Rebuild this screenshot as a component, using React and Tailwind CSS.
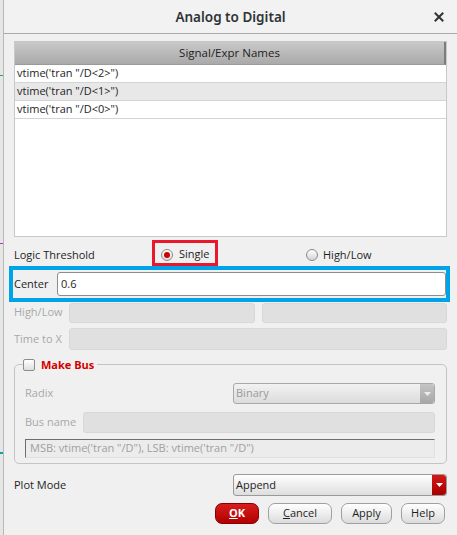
export default function App() {
  const rows = [`vtime('tran "/D<2>")`, `vtime('tran "/D<1>")`, `vtime('tran "/D<0>")`];
  return (
    <div className="flex h-[535px] w-[457px] overflow-hidden whitespace-nowrap bg-[#f0f0f0] text-[11px] text-[#1e1e1e]" style={{ fontFamily: '"Open Sans", "Noto Sans", sans-serif' }}>
      {/* desktop edge */}
      <div className="relative w-[3px] shrink-0 bg-[#e6e6e6]">
        <div className="absolute left-0 top-[75px] h-px w-[3px] bg-[#22aa44]" />
        <div className="absolute left-0 top-[243px] h-px w-[3px] bg-[#cc22cc]" />
        <div className="absolute left-0 top-[452px] h-[2px] w-[3px] bg-[#12a0a8]" />
      </div>
      <div className="flex flex-1 flex-col border-l border-[#b8b8b8]">
        {/* Title bar */}
        <div className="relative flex h-[34px] shrink-0 items-center justify-center border-b border-[#a9a9a9] bg-[#f2f2f2] pt-[2px]">
          <span className="text-[13.5px] font-semibold text-[#2e3436]" style={{ fontFamily: '"Noto Sans", sans-serif' }}>Analog to Digital</span>
          <svg className="absolute right-[13px] top-[12px]" width="10" height="10" viewBox="0 0 10 10">
            <path d="M1.5 1.5 L8.5 8.5 M8.5 1.5 L1.5 8.5" stroke="#2e3436" strokeWidth="2" strokeLinecap="square" />
          </svg>
        </div>

        <div className="flex flex-1 flex-col pl-[10px] pr-[10px] pt-[7px]">
          {/* Signal list */}
          <div className="h-[196px] border border-[#c8c8c8] bg-white">
            <div className="flex h-[23px] items-center justify-center border-b border-r-2 border-[#9a9a9a] border-r-[#7c7c7c] bg-gradient-to-b from-[#c9c9c9] to-[#a9a9a9] text-[11.5px] text-[#222]">
              Signal/Expr Names
            </div>
            {rows.map((r, i) => (
              <div key={r} className={`flex h-[18px] items-center border-b border-[#d4d4d4] pl-[2px] ${i === 1 ? "bg-[#e8e8e8]" : "bg-white"}`}>
                {r}
              </div>
            ))}
          </div>

          {/* Logic threshold */}
          <div className="mt-[3px] flex h-[26px] items-center">
            <span className="w-[138px] pt-[4px]">Logic Threshold</span>
            <div className="flex h-[26px] w-[66px] items-center border-[3px] border-[#e8192c] pl-[6px] pt-[3px]">
              <span className="mr-[6px] flex h-[12px] w-[12px] items-center justify-center rounded-full border border-[#8a8a8a] bg-gradient-to-b from-white to-[#dcdcdc]">
                <span className="h-[6px] w-[6px] rounded-full bg-[#d00000]" />
              </span>
              Single
            </div>
            <div className="ml-[88px] flex items-center pt-[4px]">
              <span className="mr-[5px] h-[12px] w-[12px] rounded-full border border-[#8a8a8a] bg-gradient-to-b from-white to-[#d4d4d4]" />
              High/Low
            </div>
          </div>

          {/* Center */}
          <div className="-ml-[5px] -mr-[3px] flex h-[36px] items-center border-[4px] border-[#00a2e8]">
            <span className="w-[44px] pl-[1px]">Center</span>
            <div className="flex h-[24px] flex-1 items-center rounded-[3px] border border-[#8c8c8c] bg-white pl-[3px]">0.6</div>
          </div>

          {/* High/Low */}
          <div className="flex h-[21px] items-center gap-[7px] text-[#a8a8a8]">
            <span className="w-[48px]">High/Low</span>
            <div className="h-[20px] flex-1 rounded-[3px] border border-[#d8d8d8] bg-[#e0e0e0]" />
            <div className="h-[20px] flex-1 rounded-[3px] border border-[#d8d8d8] bg-[#e0e0e0]" />
          </div>

          {/* Time to X */}
          <div className="mt-[5px] flex h-[22px] items-center gap-[7px] text-[#a8a8a8]">
            <span className="w-[48px]">Time to X</span>
            <div className="h-[22px] flex-1 rounded-[3px] border border-[#d8d8d8] bg-[#e0e0e0]" />
          </div>

          {/* Make Bus group */}
          <div className="relative mt-[14px] h-[100px] rounded-[5px] border border-[#c4c4c4] pl-[10px] pr-[11px] pt-[18px] text-[#a8a8a8]">
            <div className="absolute -top-[8px] left-[8px] flex items-center bg-[#f0f0f0] pr-[3px]">
              <span className="mr-[6px] h-[12px] w-[12px] rounded-[2px] border border-[#8c8c8c] bg-gradient-to-b from-white to-[#dedede]" />
              <span className="font-bold text-[#d40000]">Make Bus</span>
            </div>
            <div className="flex h-[21px] items-center">
              <span className="w-[208px]">Radix</span>
              <div className="flex h-[21px] flex-1 items-center justify-between rounded-[3px] border border-[#a8a8a8] bg-gradient-to-b from-[#f2f2f2] to-[#dcdcdc] pl-[2px]">
                <span className="text-[#9a9a9a]">Binary</span>
                <div className="flex h-full w-[14px] items-center justify-center rounded-r-[3px] bg-gradient-to-b from-[#c4c4c4] to-[#a8a8a8]">
                  <svg width="7" height="4" viewBox="0 0 7 4"><path d="M0 0 H7 L3.5 4 Z" fill="#ececec" /></svg>
                </div>
              </div>
            </div>
            <div className="mt-[8px] flex h-[21px] items-center gap-[6px]">
              <span className="w-[52px]">Bus name</span>
              <div className="h-[21px] flex-1 rounded-[3px] border border-[#d8d8d8] bg-[#e0e0e0]" />
            </div>
            <div className="mt-[6px] flex h-[19px] items-center border border-[#e0e0e0] border-l-[#6e6e6e] border-t-[#6e6e6e] bg-[#ececec] pl-[4px] text-[#a0a0a0]">
              MSB: vtime('tran "/D"), LSB: vtime('tran "/D")
            </div>
          </div>

          {/* Plot mode */}
          <div className="mt-[10px] flex h-[22px] items-center">
            <span className="w-[219px]">Plot Mode</span>
            <div className="flex h-[22px] flex-1 items-center justify-between rounded-[3px] border border-[#9a9a9a] bg-gradient-to-b from-white to-[#dedede] pl-[2px]">
              <span>Append</span>
              <div className="flex h-full w-[14px] items-center justify-center rounded-r-[3px] bg-gradient-to-b from-[#d41818] to-[#a80000]">
                <svg width="7" height="4" viewBox="0 0 7 4"><path d="M0 0 H7 L3.5 4 Z" fill="#ffffff" /></svg>
              </div>
            </div>
          </div>

          {/* Buttons */}
          <div className="mt-[7px] flex justify-end gap-[9px] pr-[2px]">
            <button className="h-[21px] w-[44px] rounded-[7px] border border-[#8a0000] bg-gradient-to-b from-[#d81c1c] to-[#b00000] font-bold text-white">
              <span className="underline">O</span>K
            </button>
            <button className="h-[21px] w-[64px] rounded-[7px] border border-[#a0a0a0] bg-gradient-to-b from-white to-[#dcdcdc]">
              <span className="underline">C</span>ancel
            </button>
            <button className="h-[21px] w-[51px] rounded-[7px] border border-[#a0a0a0] bg-gradient-to-b from-white to-[#dcdcdc]">Apply</button>
            <button className="h-[21px] w-[44px] rounded-[7px] border border-[#a0a0a0] bg-gradient-to-b from-white to-[#dcdcdc]">Help</button>
          </div>
        </div>
      </div>
    </div>
  );
}
